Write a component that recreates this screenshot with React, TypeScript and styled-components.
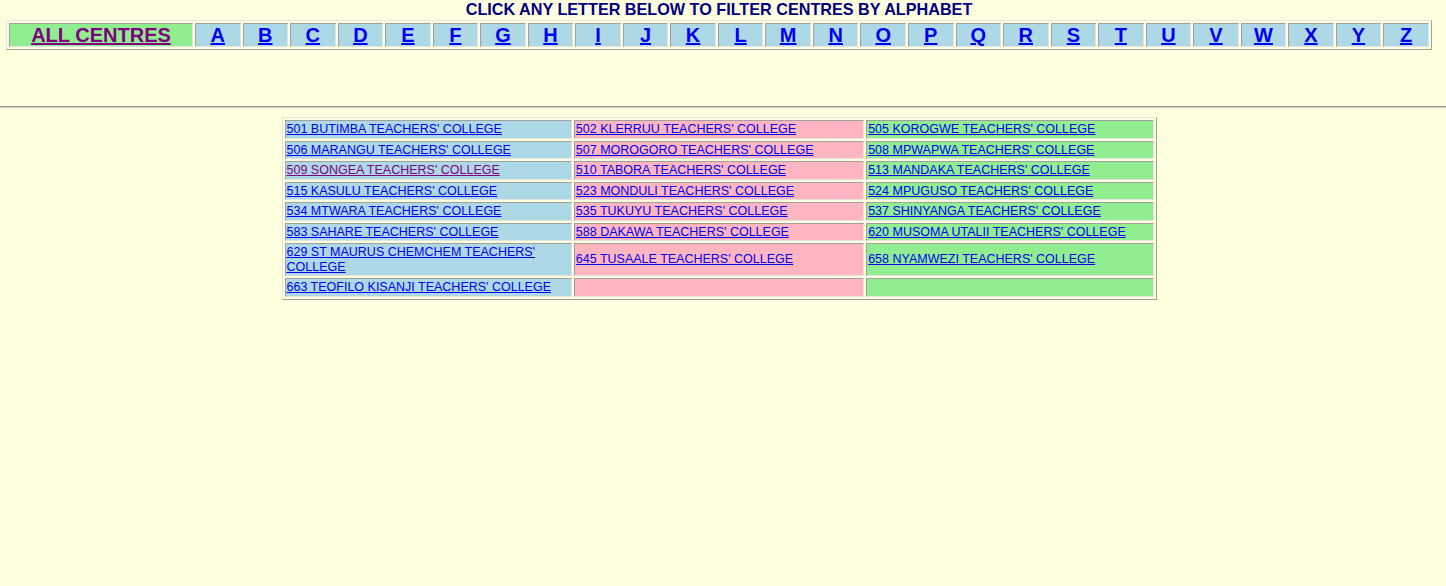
import styled, { createGlobalStyle } from 'styled-components';

const GlobalStyle = createGlobalStyle`
  body {
    margin: 0;
    background: #ffffe0;
    font-family: "Liberation Sans", Arial, sans-serif;
  }
`;

const Heading = styled.div`
  text-align: center;
  color: #000080;
  font-weight: bold;
  font-size: 16.2px;
  line-height: 18px;
  height: 20px;
  padding-right: 8px;
`;

const LetterTable = styled.table`
  margin-left: 6px;
  width: 1426px;
  table-layout: fixed;
  border-collapse: separate;
  border-spacing: 2px;
  border: 1px solid;
  border-color: #e3e3e3 #a0a0a0 #a0a0a0 #e3e3e3;
`;

const LetterCell = styled.td<{ $all?: boolean }>`
  background: ${(p) => (p.$all ? '#90ee90' : '#add8e6')};
  width: ${(p) => (p.$all ? '182px' : 'auto')};
  border: 1px solid;
  border-color: #a0a0a0 #e3e3e3 #e3e3e3 #a0a0a0;
  text-align: center;
  padding: 0;
  height: 22px;
  line-height: 22px;
  font-size: 20px;
  font-weight: bold;
`;

const Link = styled.a<{ $visited?: boolean }>`
  color: ${(p) => (p.$visited ? '#800080' : '#0000ee')};
  text-decoration: underline;
`;

const Rule = styled.hr`
  margin: 56px 0 9px;
  border: none;
  border-top: 1px solid #9a9a9a;
  border-bottom: 1px solid #d0d0c0;
  height: 0;
`;

const CentreTable = styled.table`
  margin: 0 auto;
  width: 875px;
  border-collapse: separate;
  border-spacing: 2px;
  border: 1px solid;
  border-color: #e3e3e3 #a0a0a0 #a0a0a0 #e3e3e3;
  position: relative;
  left: -4px;
`;

const colours = ['#add8e6', '#ffb6c1', '#90ee90'];

const CentreCell = styled.td<{ $col: number }>`
  background: ${(p) => colours[p.$col]};
  width: ${(p) => (p.$col === 1 ? '287px' : '284px')};
  border: 1px solid;
  border-color: #a0a0a0 #e3e3e3 #e3e3e3 #a0a0a0;
  padding: 1px;
  font-size: 12.5px;
  line-height: 14.5px;
  vertical-align: middle;
`;

const letters = 'ABCDEFGHIJKLMNOPQRSTUVWXYZ'.split('');

const centres: string[][] = [
  ["501 BUTIMBA TEACHERS' COLLEGE", "502 KLERRUU TEACHERS' COLLEGE", "505 KOROGWE TEACHERS' COLLEGE"],
  ["506 MARANGU TEACHERS' COLLEGE", "507 MOROGORO TEACHERS' COLLEGE", "508 MPWAPWA TEACHERS' COLLEGE"],
  ["509 SONGEA TEACHERS' COLLEGE", "510 TABORA TEACHERS' COLLEGE", "513 MANDAKA TEACHERS' COLLEGE"],
  ["515 KASULU TEACHERS' COLLEGE", "523 MONDULI TEACHERS' COLLEGE", "524 MPUGUSO TEACHERS' COLLEGE"],
  ["534 MTWARA TEACHERS' COLLEGE", "535 TUKUYU TEACHERS' COLLEGE", "537 SHINYANGA TEACHERS' COLLEGE"],
  ["583 SAHARE TEACHERS' COLLEGE", "588 DAKAWA TEACHERS' COLLEGE", "620 MUSOMA UTALII TEACHERS' COLLEGE"],
  ["629 ST MAURUS CHEMCHEM TEACHERS' COLLEGE", "645 TUSAALE TEACHERS' COLLEGE", "658 NYAMWEZI TEACHERS' COLLEGE"],
  ["663 TEOFILO KISANJI TEACHERS' COLLEGE", '', ''],
];

const visited = new Set(["509 SONGEA TEACHERS' COLLEGE"]);

export default function App() {
  return (
    <>
      <GlobalStyle />
      <Heading>CLICK ANY LETTER BELOW TO FILTER CENTRES BY ALPHABET</Heading>
      <LetterTable>
        <tbody>
          <tr>
            <LetterCell $all>
              <Link href="#" $visited>ALL CENTRES</Link>
            </LetterCell>
            {letters.map((l) => (
              <LetterCell key={l}>
                <Link href="#">{l}</Link>
              </LetterCell>
            ))}
          </tr>
        </tbody>
      </LetterTable>
      <Rule />
      <CentreTable>
        <tbody>
          {centres.map((row, i) => (
            <tr key={i}>
              {row.map((name, j) => (
                <CentreCell key={j} $col={j}>
                  {name && (
                    <Link href="#" $visited={visited.has(name)}>
                      {name}
                    </Link>
                  )}
                </CentreCell>
              ))}
            </tr>
          ))}
        </tbody>
      </CentreTable>
    </>
  );
}
